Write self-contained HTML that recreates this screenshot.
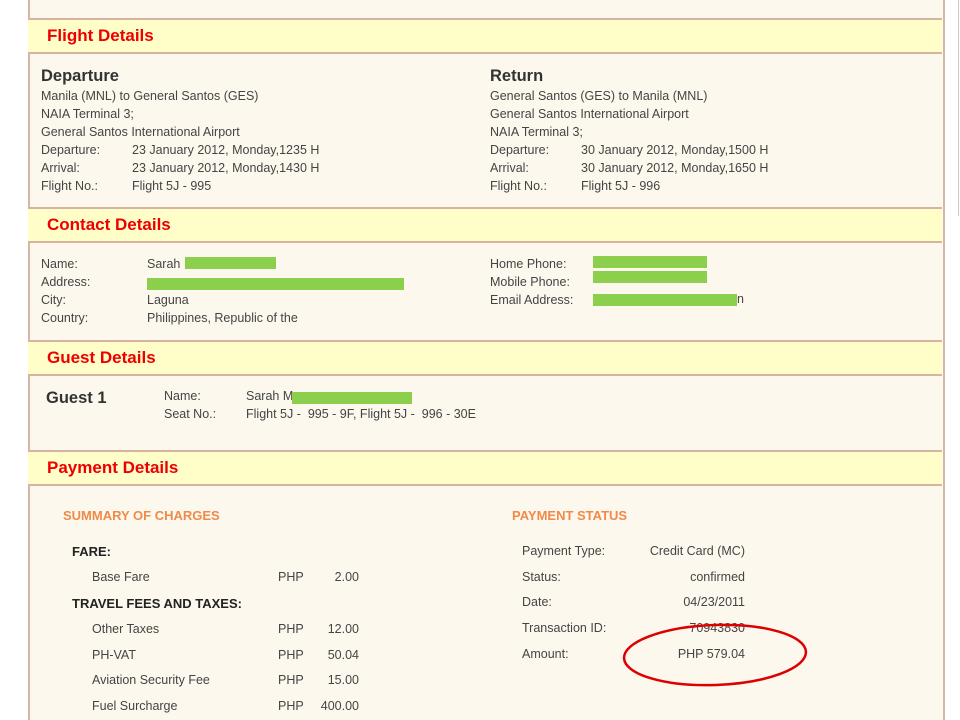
<!DOCTYPE html>
<html style="overflow:hidden"><head><style>
html,body{overflow:hidden}
body{margin:0;width:960px;height:720px;background:#fff;position:relative;overflow:hidden;font-family:"Liberation Sans",sans-serif;color:#444;font-size:12.5px}
.a{position:absolute;white-space:nowrap}
.panel{position:absolute;left:28px;top:-2px;width:913px;height:722px;background:#fcf8ee;border-left:2px solid #d4b8a4;border-right:2px solid #d4b8a4}
.hd{position:absolute;left:28px;width:914px;height:32px;background:#fffdc8;border-top:2px solid #d8b4a0;border-bottom:2px solid #d8b4a0}
.hd span{position:absolute;left:19px;top:6px;font-weight:bold;font-size:17px;color:#e00}
.h2{font-size:16.5px;font-weight:bold;color:#333}
.g{background:#8ccf4c;position:absolute;height:12px}
.or{color:#ef8a4a;font-weight:bold;font-size:13px}
.b{font-weight:bold;color:#222;font-size:13px}
</style></head><body>
<div class="panel"></div>
<div class="a" style="left:958px;top:0;width:1px;height:216px;background:#ccc"></div>
<div class="hd" style="top:18px"><span>Flight Details</span></div>
<div class="hd" style="top:207px"><span>Contact Details</span></div>
<div class="hd" style="top:340px"><span>Guest Details</span></div>
<div class="hd" style="top:450px"><span>Payment Details</span></div>

<div class="a h2" style="left:41px;top:67px">Departure</div>
<div class="a" style="left:41px;top:88px;line-height:17.9px">Manila (MNL) to General Santos (GES)<br>NAIA Terminal 3;<br>General Santos International Airport<br>Departure:<br>Arrival:<br>Flight No.:</div>
<div class="a" style="left:132px;top:141.7px;line-height:17.9px">23 January 2012, Monday,1235 H<br>23 January 2012, Monday,1430 H<br>Flight 5J - 995</div>
<div class="a h2" style="left:490px;top:67px">Return</div>
<div class="a" style="left:490px;top:88px;line-height:17.9px">General Santos (GES) to Manila (MNL)<br>General Santos International Airport<br>NAIA Terminal 3;<br>Departure:<br>Arrival:<br>Flight No.:</div>
<div class="a" style="left:581px;top:141.7px;line-height:17.9px">30 January 2012, Monday,1500 H<br>30 January 2012, Monday,1650 H<br>Flight 5J - 996</div>

<div class="a" style="left:41px;top:256px;line-height:17.9px">Name:<br>Address:<br>City:<br>Country:</div>
<div class="a" style="left:147px;top:256px;line-height:17.9px">Sarah<br>&nbsp;<br>Laguna<br>Philippines, Republic of the</div>
<div class="g" style="left:185px;top:257px;width:91px"></div>
<div class="g" style="left:147px;top:278px;width:257px"></div>
<div class="a" style="left:490px;top:256px;line-height:17.9px">Home Phone:<br>Mobile Phone:<br>Email Address:</div>
<div class="g" style="left:593px;top:256px;width:114px"></div>
<div class="g" style="left:593px;top:271px;width:114px"></div>
<div class="g" style="left:593px;top:294px;width:144px"></div>
<div class="a" style="left:737px;top:292px">n</div>

<div class="a h2" style="left:46px;top:389px">Guest 1</div>
<div class="a" style="left:164px;top:388px;line-height:17.9px">Name:<br>Seat No.:</div>
<div class="a" style="left:246px;top:388px;line-height:17.9px">Sarah M<br>Flight 5J - &nbsp;995 - 9F, Flight 5J - &nbsp;996 - 30E</div>
<div class="g" style="left:292px;top:392px;width:120px"></div>

<div class="a or" style="left:63px;top:508px">SUMMARY OF CHARGES</div>
<div class="a b" style="left:72px;top:544px">FARE:</div>
<div class="a b" style="left:72px;top:596px">TRAVEL FEES AND TAXES:</div>
<div class="a" style="left:92px;top:570px">Base Fare</div>
<div class="a" style="left:92px;top:617px;line-height:25.7px">Other Taxes<br>PH-VAT<br>Aviation Security Fee<br>Fuel Surcharge</div>
<div class="a" style="left:278px;top:570px">PHP</div>
<div class="a" style="left:278px;top:617px;line-height:25.7px">PHP<br>PHP<br>PHP<br>PHP</div>
<div class="a" style="left:300px;width:59px;text-align:right;top:570px">2.00</div>
<div class="a" style="left:300px;width:59px;text-align:right;top:617px;line-height:25.7px">12.00<br>50.04<br>15.00<br>400.00</div>

<div class="a or" style="left:512px;top:508px">PAYMENT STATUS</div>
<div class="a" style="left:522px;top:539px;line-height:25.7px">Payment Type:<br>Status:<br>Date:<br>Transaction ID:<br>Amount:</div>
<div class="a" style="left:600px;width:145px;text-align:right;top:539px;line-height:25.7px">Credit Card (MC)<br>confirmed<br>04/23/2011<br>70943830<br>PHP 579.04</div>
<svg class="a" style="left:0;top:0" width="960" height="720"><ellipse cx="715" cy="655" rx="91" ry="30" fill="none" stroke="#d00" stroke-width="2.5" transform="rotate(-2 715 655)"/></svg>
</body></html>
